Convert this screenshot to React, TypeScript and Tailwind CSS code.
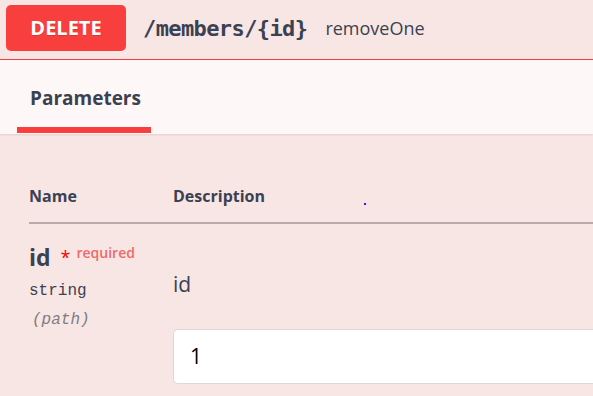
import React from "react";

export default function App() {
  return (
    <div className="w-[593px] h-[396px] overflow-hidden bg-[#f8e6e5] text-[#3b4151] [font-family:'Open_Sans',sans-serif]">
      {/* Summary bar */}
      <div className="flex items-start h-[60px] pt-[5px] pl-[6px] border-b border-[#f93e3e]">
        <div className="w-[120px] h-[46px] rounded-[5px] bg-[#f93e3e] flex items-center justify-center text-white font-bold text-[20px] [text-shadow:0_1px_0_rgba(0,0,0,0.15)]">
          DELETE
        </div>
        <div className="ml-[17px] h-[46px] flex items-center text-[22px] font-bold [font-family:'DejaVu_Sans_Mono',monospace] tracking-[-0.6px] whitespace-nowrap">
          /members/&#123;id&#125;
        </div>
        <div className="ml-[18px] h-[46px] flex items-center text-[18px] whitespace-nowrap">
          removeOne
        </div>
      </div>

      {/* Tab header */}
      <div className="h-[74px] bg-[#fdf7f7] shadow-[0_1px_2px_rgba(0,0,0,0.1)] flex items-end pl-[17px]">
        <div className="w-[134px] h-full flex flex-col">
          <div className="flex-1 flex items-center pl-[13px] pt-[10px] text-[19px] font-bold">Parameters</div>
          <div className="h-[6px] bg-[#f93e3e] mb-[1px]" />
        </div>
      </div>

      {/* Parameters table */}
      <div className="relative pl-[29px] pt-[50px]">
        <div className="flex text-[16px] font-bold h-[40px] border-b-2 border-[#bba9aa]">
          <div className="w-[144px]">Name</div>
          <div>Description</div>
        </div>
        <div className="absolute left-[364px] top-[69px] w-[2px] h-[2px] bg-[#2020ff]" />

        <div className="flex pt-[18px]">
          <div className="w-[144px]">
            <div className="flex items-start">
              <span className="text-[23px] font-bold leading-[30px]">id</span>
              <span className="ml-[10px] mt-[4px] text-[18px] text-[#ff0000] leading-[22px]">*</span>
              <span className="ml-[6px] text-[14px] font-semibold text-[#f06a6a] leading-[20px] mt-[1px]">required</span>
            </div>
            <div className="mt-[7px] text-[16px] [font-family:'Liberation_Mono',monospace] leading-[24px]">string</div>
            <div className="mt-[6px] ml-[3px] text-[16px] italic text-[#7e7e7e] [font-family:'Liberation_Mono',monospace] leading-[22px]">(path)</div>
          </div>
          <div className="flex-1">
            <div className="pt-[28px] text-[21px] leading-[28px]">id</div>
            <div className="mt-[31px] h-[55px] bg-white border border-[#d9d9d9] rounded-l-[5px] border-r-0 flex items-center pl-[16px] text-[21px] text-black">
              1
            </div>
          </div>
        </div>
      </div>
    </div>
  );
}
